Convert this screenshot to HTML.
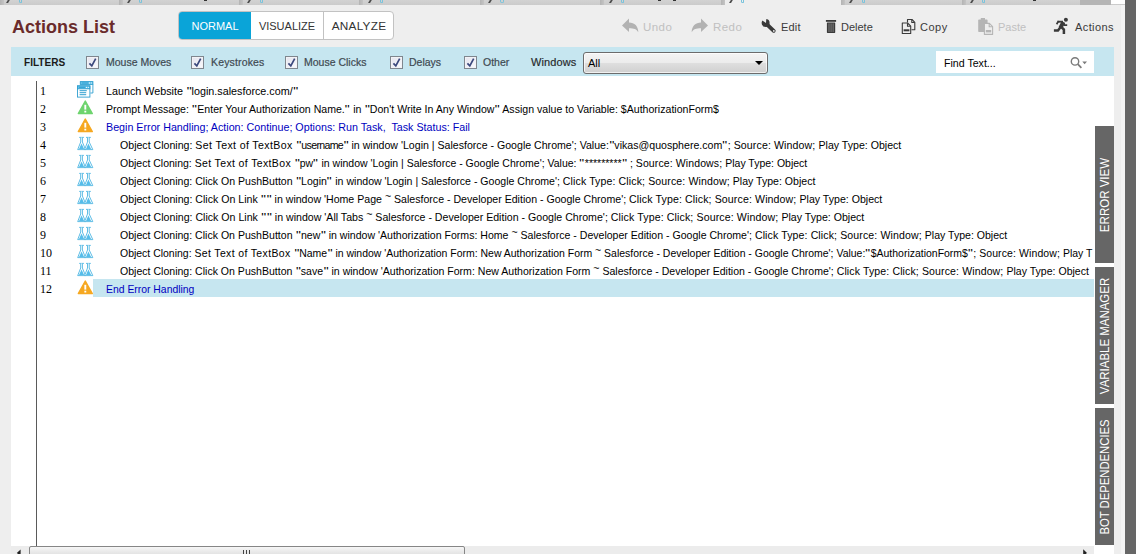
<!DOCTYPE html>
<html>
<head>
<meta charset="utf-8">
<title>Actions List</title>
<style>
html,body{margin:0;padding:0;}
body{width:1136px;height:554px;overflow:hidden;position:relative;background:#eeeeee;font-family:"Liberation Sans",sans-serif;color:#222;}
.abs{position:absolute;}
#topstrip{left:0;top:0;width:1136px;height:5px;background:linear-gradient(#d2d2d2,#cbcbcb);overflow:hidden;}
#topstrip i{position:absolute;top:0;height:5px;display:block;}
#title{left:12px;top:16px;font-size:18px;font-weight:bold;color:#6a2b2b;line-height:22px;white-space:nowrap;}
#modes{left:178px;top:11px;width:216px;height:29px;border:1px solid #c2c2c2;border-radius:4px;box-sizing:border-box;background:#fff;overflow:hidden;}
#modes span{position:absolute;top:0;height:27px;line-height:29px;font-size:11px;text-align:center;color:#333;white-space:nowrap;}
#m1{left:-1px;width:72px;padding-left:1px;background:#0aa4d8;color:#fff !important;top:-1px !important;height:29px !important;line-height:31px !important;}
#m2{left:72px;width:72px;border-right:1px solid #c2c2c2;}
#m3{left:145px;width:70px;font-size:11.8px !important;letter-spacing:0.25px;}
.tb{top:20px;font-size:11px;line-height:14px;color:#3a3a3a;white-space:nowrap;letter-spacing:0.2px;}
.tb.dis{color:#c0c0c0;}
.ico{position:absolute;overflow:visible;}
#filters{left:11px;top:47px;width:1103px;height:29px;background:#c6e6f0;}
#filters .lbl{position:absolute;top:8px;font-size:10.5px;line-height:14px;color:#3f4a52;white-space:nowrap;transform-origin:0 50%;-webkit-text-stroke:0.2px #3f4a52;}
#filters .cb{position:absolute;top:9px;width:11px;height:11px;border:1px solid #7f868e;background:linear-gradient(135deg,#e4e4ee,#fafafc);box-shadow:inset 0 0 0 1px #f2f2f6;}
#filters .cb svg{position:absolute;left:0;top:0;}
#flt{font-weight:bold;color:#1b1b1b !important;font-size:11.5px !important;transform:scaleX(0.875);-webkit-text-stroke:0 !important;}
#sel{left:572px;top:5px;width:185px;height:22px;box-sizing:border-box;border:1px solid #6c6c6c;border-radius:3px;background:linear-gradient(#f4f4f4,#ececec 48%,#dedede 52%,#d0d0d0);box-shadow:inset 0 0 0 1px rgba(255,255,255,.7);}
#sel span{position:absolute;left:4px;top:3px;font-size:11px;line-height:14px;color:#000;}
#sel b{position:absolute;right:4px;top:8px;width:0;height:0;border-left:4px solid transparent;border-right:4px solid transparent;border-top:4px solid #000;}
#find{left:925px;top:4px;width:158px;height:22px;background:#fff;}
#find span{position:absolute;left:8px;top:5px;font-size:11px;line-height:14px;color:#000;}
#list{left:11px;top:76px;width:1103px;height:478px;background:#fff;overflow:hidden;}
#vline{left:25px;top:5px;width:1px;height:465px;background:#5a5a5a;}
.row{position:absolute;left:0;width:1081px;height:18px;overflow:hidden;}
.row .n{position:absolute;left:29px;top:1px;font-family:"Liberation Serif",serif;font-size:12px;line-height:18px;color:#000;}
.row .t{position:absolute;left:95px;top:1px;font-size:11px;line-height:18px;color:#000;white-space:pre;transform-origin:0 50%;}
.row .t.ind{left:109px;}
.row .t b.w{font-weight:normal;letter-spacing:0.38px;}
.row .t b.nr{font-weight:normal;letter-spacing:-0.7px;}
.row .t b.c{font-weight:normal;letter-spacing:0.12px;}
.row .t b.tl{font-weight:normal;position:relative;top:-3px;}
.row .t b.q{font-weight:normal;display:inline-block;transform:scaleX(1.3);margin:0 0.9px;}
.row .t.blue{color:#0000c0;}
.row svg{position:absolute;left:66px;top:0;}
.row.selr .bg{position:absolute;left:82px;top:0;width:1001px;height:18px;background:#c6e6f0;}
.vtab{left:1095px;width:19px;background:#666;color:#fff;}
.vtab span{position:absolute;left:50%;top:50%;white-space:nowrap;font-size:12px;line-height:14px;transform:translate(-50%,-50%) rotate(-90deg) scaleX(var(--k));}
#rstrip{left:1125px;top:0;width:11px;height:554px;background:#666;}
#hscroll{left:11px;top:546px;width:1083px;height:8px;background:#ececec;overflow:hidden;}
#hscroll .thumb{position:absolute;left:18px;top:0;width:436px;height:12px;box-sizing:border-box;border:1px solid #868686;border-radius:2px 2px 0 0;background:linear-gradient(#f6f6f6,#dcdcdc);}
#hscroll .grip{position:absolute;top:4px;width:1.3px;height:6px;background:#444;}
#lstrip{left:1120.5px;top:5px;width:4.5px;height:549px;background:#f4f4f4;}

</style>
</head>
<body>
<div id="topstrip" class="abs"><i style="left:0.0px;width:4px;background:linear-gradient(90deg,#b4b4b4,#c4c4c4)"></i><i style="left:7.2px;width:1.6px;height:2.8px;background:#4a4a4a;transform:skewX(-30deg)"></i><i style="left:18.6px;width:1.2px;height:2.4px;border:1px solid #79c3dc;border-top:0;border-radius:0 0 2px 2px"></i><i style="left:118.5px;width:4px;background:linear-gradient(90deg,#b4b4b4,#c4c4c4)"></i><i style="left:127.7px;width:1.6px;height:2.8px;background:#4a4a4a;transform:skewX(-30deg)"></i><i style="left:139.1px;width:1.2px;height:2.4px;border:1px solid #79c3dc;border-top:0;border-radius:0 0 2px 2px"></i><i style="left:238.9px;width:4px;background:linear-gradient(90deg,#b4b4b4,#c4c4c4)"></i><i style="left:248.1px;width:1.6px;height:2.8px;background:#4a4a4a;transform:skewX(-30deg)"></i><i style="left:259.5px;width:1.2px;height:2.4px;border:1px solid #79c3dc;border-top:0;border-radius:0 0 2px 2px"></i><i style="left:359.4px;width:4px;background:linear-gradient(90deg,#b4b4b4,#c4c4c4)"></i><i style="left:368.6px;width:1.6px;height:2.8px;background:#4a4a4a;transform:skewX(-30deg)"></i><i style="left:380.0px;width:1.2px;height:2.4px;border:1px solid #79c3dc;border-top:0;border-radius:0 0 2px 2px"></i><i style="left:479.8px;width:4px;background:linear-gradient(90deg,#b4b4b4,#c4c4c4)"></i><i style="left:489.0px;width:1.6px;height:2.8px;background:#4a4a4a;transform:skewX(-30deg)"></i><i style="left:500.4px;width:1.2px;height:2.4px;border:1px solid #79c3dc;border-top:0;border-radius:0 0 2px 2px"></i><i style="left:600.2px;width:4px;background:linear-gradient(90deg,#b4b4b4,#c4c4c4)"></i><i style="left:609.5px;width:1.6px;height:2.8px;background:#4a4a4a;transform:skewX(-30deg)"></i><i style="left:620.9px;width:1.2px;height:2.4px;border:1px solid #79c3dc;border-top:0;border-radius:0 0 2px 2px"></i><i style="left:725.0px;width:115.5px;background:#eeeeee"></i><i style="left:720.7px;width:4px;background:linear-gradient(90deg,#b4b4b4,#c4c4c4)"></i><i style="left:729.9px;width:1.6px;height:2.8px;background:#4a4a4a;transform:skewX(-30deg)"></i><i style="left:741.3px;width:1.2px;height:2.4px;border:1px solid #79c3dc;border-top:0;border-radius:0 0 2px 2px"></i><i style="left:841.1px;width:4px;background:linear-gradient(90deg,#b4b4b4,#c4c4c4)"></i><i style="left:850.4px;width:1.6px;height:2.8px;background:#4a4a4a;transform:skewX(-30deg)"></i><i style="left:861.8px;width:1.2px;height:2.4px;border:1px solid #79c3dc;border-top:0;border-radius:0 0 2px 2px"></i><i style="left:961.6px;width:4px;background:linear-gradient(90deg,#b4b4b4,#c4c4c4)"></i><i style="left:970.8px;width:1.6px;height:2.8px;background:#4a4a4a;transform:skewX(-30deg)"></i><i style="left:982.2px;width:1.2px;height:2.4px;border:1px solid #79c3dc;border-top:0;border-radius:0 0 2px 2px"></i><i style="left:1082.0px;width:4px;background:linear-gradient(90deg,#b4b4b4,#c4c4c4)"></i><i style="left:1091.2px;width:1.6px;height:2.8px;background:#4a4a4a;transform:skewX(-30deg)"></i><i style="left:1102.6px;width:1.2px;height:2.4px;border:1px solid #79c3dc;border-top:0;border-radius:0 0 2px 2px"></i><i style="left:204px;width:3px;height:1.4px;background:#333"></i><i style="left:658px;width:3px;height:1.4px;background:#333"></i><i style="left:673px;width:3px;height:1.4px;background:#333"></i><i style="left:1033px;width:3px;height:1.4px;background:#333"></i><i style="left:1080px;width:31px;background:#b5b5b5"></i><i style="left:1111px;width:14px;height:4px;background:#fff"></i></div>
<div id="title" class="abs">Actions List</div>
<div id="modes" class="abs"><span id="m1">NORMAL</span><span id="m2">VISUALIZE</span><span id="m3">ANALYZE</span></div>

<div class="abs tb dis" style="left:643px;font-size:11.5px;letter-spacing:0.45px">Undo</div>
<div class="abs tb dis" style="left:713px;font-size:11.5px;letter-spacing:0.45px">Redo</div>
<div class="abs tb" style="left:781px">Edit</div>
<div class="abs tb" style="left:841px;letter-spacing:0">Delete</div>
<div class="abs tb" style="left:920px;letter-spacing:0.5px">Copy</div>
<div class="abs tb dis" style="left:998px;letter-spacing:0">Paste</div>
<div class="abs tb" style="left:1075px;letter-spacing:0.4px">Actions</div>


<!-- toolbar icons -->
<svg class="ico" style="left:622px;top:18px" width="17" height="15" viewBox="0 0 17 15"><path d="M0,7.6 L7,0.6 L7,4.4 C12.5,4.4 16.3,8 16.3,14.2 C14.5,11 12,10.2 7,10.2 L7,14 Z" fill="#b2b2b2"/></svg>
<svg class="ico" style="left:691px;top:18px" width="17" height="15" viewBox="0 0 17 15"><path d="M17,7.6 L10,0.6 L10,4.4 C4.5,4.4 0.7,8 0.7,14.2 C2.5,11 5,10.2 10,10.2 L10,14 Z" fill="#b2b2b2"/></svg>
<svg class="ico" style="left:761px;top:18px" width="17" height="17" viewBox="0 0 17 17"><path d="M5.4,5.8 L12.7,12.8" stroke="#3a3a3a" stroke-width="3.9" stroke-linecap="round" fill="none"/><circle cx="4.6" cy="4.9" r="4" fill="#3a3a3a"/><path d="M4.9,5.2 L0.6,-0.8 L7.6,-0.8 Z" fill="#eeeeee" transform="rotate(-20 4.6 4.9)"/><circle cx="12.8" cy="12.9" r="0.9" fill="#eeeeee"/></svg>
<svg class="ico" style="left:825px;top:19px" width="12" height="15" viewBox="0 0 12 15"><rect x="0.9" y="1" width="10.2" height="1.8" fill="#3a3a3a"/><rect x="1.9" y="3.4" width="8.3" height="10.5" rx="0.6" fill="#3a3a3a"/><rect x="3.5" y="4.4" width="1" height="8.6" fill="#808080"/><rect x="5.55" y="4.4" width="1" height="8.6" fill="#808080"/><rect x="7.6" y="4.4" width="1" height="8.6" fill="#808080"/></svg>
<svg class="ico" style="left:901px;top:18px" width="15" height="17" viewBox="0 0 15 17"><g fill="none" stroke="#3a3a3a" stroke-width="1.1" stroke-linejoin="round"><path d="M6.5,4.5 L6.5,1.5 L11,1.5 L13.8,4.3 L13.8,11.8 L10.5,11.8"/><path d="M10.8,1.7 L10.8,4.5 L13.6,4.5"/><path d="M1.3,15.5 L1.3,5 L6.6,5 L9.7,8.1 L9.7,15.5 Z" fill="#eeeeee"/><path d="M6.5,5.2 L6.5,8.2 L9.5,8.2"/></g><rect x="2.6" y="11.3" width="5.8" height="2" fill="#3a3a3a"/></svg>
<svg class="ico" style="left:977px;top:17px" width="17" height="19" viewBox="0 0 17 19"><rect x="1.2" y="2.6" width="9.4" height="12.4" rx="0.8" fill="#b5b5b5"/><rect x="3.8" y="1" width="4.2" height="3" fill="#b5b5b5"/><path d="M7.4,17.4 L7.4,6.4 L12.4,6.4 L15.6,9.6 L15.6,17.4 Z" fill="#eeeeee" stroke="#b5b5b5" stroke-width="1.1" stroke-linejoin="round"/><path d="M12.2,6.6 L12.2,9.8 L15.4,9.8" fill="none" stroke="#b5b5b5" stroke-width="1.1"/><rect x="8.8" y="13" width="5.4" height="2.4" fill="#b5b5b5"/></svg>
<svg class="ico" style="left:1053px;top:17px" width="16" height="18" viewBox="0 0 16 18"><circle cx="12.9" cy="2.7" r="2" fill="#3a3a3a"/><g fill="none" stroke="#3a3a3a" stroke-linecap="butt" stroke-linejoin="miter"><path d="M10.4,5 L7.4,10.8" stroke-width="4"/><path d="M4.6,4.7 L10,4.7" stroke-width="1.9"/><path d="M5.6,4 L3.6,7.2" stroke-width="1.7"/><path d="M10.6,6 L11.4,8.2 L14.2,8.2" stroke-width="1.8"/><path d="M7.6,10 L5,13.4 L0.9,13.4" stroke-width="2.5"/><path d="M8,9.6 L10.9,12.6 L10.9,16.9" stroke-width="2.5"/></g></svg>

<div id="filters" class="abs">
  <div class="lbl" id="flt" style="left:13px">FILTERS</div>
  <div class="cb" style="left:75px"><svg width="11" height="11" viewBox="0 0 11 11"><path d="M2.4,6.4 L4.8,8.9 L8.7,1.7" fill="none" stroke="#3b487c" stroke-width="1.7"/></svg></div><div class="lbl" style="left:95px">Mouse Moves</div>
  <div class="cb" style="left:180px"><svg width="11" height="11" viewBox="0 0 11 11"><path d="M2.4,6.4 L4.8,8.9 L8.7,1.7" fill="none" stroke="#3b487c" stroke-width="1.7"/></svg></div><div class="lbl" style="left:200px;letter-spacing:0.15px">Keystrokes</div>
  <div class="cb" style="left:274px"><svg width="11" height="11" viewBox="0 0 11 11"><path d="M2.4,6.4 L4.8,8.9 L8.7,1.7" fill="none" stroke="#3b487c" stroke-width="1.7"/></svg></div><div class="lbl" style="left:293px">Mouse Clicks</div>
  <div class="cb" style="left:379px"><svg width="11" height="11" viewBox="0 0 11 11"><path d="M2.4,6.4 L4.8,8.9 L8.7,1.7" fill="none" stroke="#3b487c" stroke-width="1.7"/></svg></div><div class="lbl" style="left:398px">Delays</div>
  <div class="cb" style="left:453px"><svg width="11" height="11" viewBox="0 0 11 11"><path d="M2.4,6.4 L4.8,8.9 L8.7,1.7" fill="none" stroke="#3b487c" stroke-width="1.7"/></svg></div><div class="lbl" style="left:472px">Other</div>
  <div class="lbl" style="left:520px;color:#1b1b1b;font-size:11px;letter-spacing:0.1px">Windows</div>
  <div id="sel" class="abs"><span>All</span><b></b></div>
  <div id="find" class="abs"><span style="transform:scaleX(0.965);transform-origin:0 50%">Find Text...</span><svg class="ico" style="left:133px;top:4px" width="22" height="16" viewBox="0 0 22 16"><circle cx="6" cy="6.4" r="3.7" fill="none" stroke="#7a7a7a" stroke-width="1.4"/><path d="M8.8,9.2 L12.4,12.8" stroke="#7a7a7a" stroke-width="1.7"/><path d="M13.3,6.4 L18,6.4 L15.65,9.2 Z" fill="#7a7a7a"/></svg></div>
</div>

<div id="list" class="abs">
  <div id="vline" class="abs"></div>
  <div class="row" style="top:5px"><svg width="17" height="17" viewBox="0 0 17 17"><rect x="3.3" y="0.6" width="12.6" height="2.8" fill="#63c2e8" stroke="#2f9fd0" stroke-width="0.9"/><path d="M15.9,3.4 L15.9,12 L13.4,12" fill="none" stroke="#2f9fd0" stroke-width="0.9"/><path d="M5,2 L11,2" stroke="#2f9fd0" stroke-width="0.9"/><rect x="12" y="1.5" width="1" height="1" fill="#fff"/><rect x="13.8" y="1.5" width="1" height="1" fill="#fff"/><rect x="0.5" y="4.9" width="12.4" height="11.2" fill="#fff" stroke="#2f9fd0" stroke-width="0.9"/><rect x="0.5" y="4.9" width="12.4" height="2.9" fill="#63c2e8" stroke="#2f9fd0" stroke-width="0.9"/><path d="M2,6.4 L8,6.4" stroke="#2f9fd0" stroke-width="0.9"/><rect x="9" y="5.9" width="1" height="1" fill="#fff"/><rect x="10.8" y="5.9" width="1" height="1" fill="#fff"/><path d="M2.6,9.7 L9.8,9.7 M2.6,11.7 L9.2,11.7 M2.6,13.7 L9.2,13.7" stroke="#2f9fd0" stroke-width="1"/></svg><span class="n">1</span><span class="t" style="transform:scaleX(0.9784)">Launch Website <b class="q">"</b>login.salesforce.com/<b class="q">"</b></span></div>
  <div class="row" style="top:23px"><svg width="17" height="15" viewBox="0 0 17 15" style="top:1px"><path d="M8.3,1 L15.3,13.6 L1.3,13.6 Z" fill="#6ed46e" stroke="#6ed46e" stroke-width="1.4" stroke-linejoin="round"/><path d="M8.3,4.8 L8.3,9.6" stroke="#fff" stroke-width="1.9"/><rect x="7.35" y="10.7" width="1.9" height="1.8" fill="#fff"/></svg><span class="n">2</span><span class="t" style="transform:scaleX(0.9612)">Prompt Message: <b class="q">"</b>Enter Your Authorization Name.<b class="q">"</b> in <b class="q">"</b>Don't Write In Any Window<b class="q">"</b> Assign value to Variable: $AuthorizationForm$</span></div>
  <div class="row" style="top:41px"><svg width="17" height="15" viewBox="0 0 17 15" style="top:1px"><path d="M8.3,1 L15.3,13.6 L1.3,13.6 Z" fill="#f6a821" stroke="#f6a821" stroke-width="1.4" stroke-linejoin="round"/><path d="M8.3,4.8 L8.3,9.6" stroke="#fff" stroke-width="1.9"/><rect x="7.35" y="10.7" width="1.9" height="1.8" fill="#fff"/></svg><span class="n">3</span><span class="t blue" style="transform:scaleX(0.9738)">Begin Error Handling; Action: Continue; Options: Run Task,  Task Status: Fail</span></div>
  <div class="row" style="top:59px"><svg width="17" height="15" viewBox="0 0 17 15" style="top:1px"><g stroke="#4db6e2" stroke-width="0.9" fill="none"><path d="M2.2,1.4 L6.9,1.4 M9,1.4 L13.8,1.4"/><path d="M3.7,1.4 L3.7,6 L0.7,13.6 L8.5,13.6 L5.4,6 L5.4,1.4" fill="#fff"/><path d="M10.5,1.4 L10.5,6 L7.6,13.6 L15.8,13.6 L12.2,6 L12.2,1.4" fill="#fff"/></g><path d="M4.55,7.6 L7.1,13.1 L2,13.1 Z M11.35,7.6 L14.1,13.1 L9,13.1 Z" fill="#56bdea"/></svg><span class="n">4</span><span class="t ind" style="transform:scaleX(0.9628)">Object Cloning: <b class="w">Set Text of TextBox </b><b class="q">"</b><b class="nr">username</b><b class="q">"</b> in window 'Login | Salesforce - Google Chrome'; Value:<b class="q">"</b>vikas@quosphere.com<b class="q">"</b>; <b class="c">Source: Window; </b>Play Type: Object</span></div>
  <div class="row" style="top:77px"><svg width="17" height="15" viewBox="0 0 17 15" style="top:1px"><g stroke="#4db6e2" stroke-width="0.9" fill="none"><path d="M2.2,1.4 L6.9,1.4 M9,1.4 L13.8,1.4"/><path d="M3.7,1.4 L3.7,6 L0.7,13.6 L8.5,13.6 L5.4,6 L5.4,1.4" fill="#fff"/><path d="M10.5,1.4 L10.5,6 L7.6,13.6 L15.8,13.6 L12.2,6 L12.2,1.4" fill="#fff"/></g><path d="M4.55,7.6 L7.1,13.1 L2,13.1 Z M11.35,7.6 L14.1,13.1 L9,13.1 Z" fill="#56bdea"/></svg><span class="n">5</span><span class="t ind" style="transform:scaleX(0.954)">Object Cloning: <b class="w">Set Text of TextBox </b><b class="q">"</b>pw<b class="q">"</b> in window 'Login | Salesforce - Google Chrome'; Value: <b class="q">"</b>*********<b class="q">"</b> ; <b class="c">Source: Windows; </b>Play Type: Object</span></div>
  <div class="row" style="top:95px"><svg width="17" height="15" viewBox="0 0 17 15" style="top:1px"><g stroke="#4db6e2" stroke-width="0.9" fill="none"><path d="M2.2,1.4 L6.9,1.4 M9,1.4 L13.8,1.4"/><path d="M3.7,1.4 L3.7,6 L0.7,13.6 L8.5,13.6 L5.4,6 L5.4,1.4" fill="#fff"/><path d="M10.5,1.4 L10.5,6 L7.6,13.6 L15.8,13.6 L12.2,6 L12.2,1.4" fill="#fff"/></g><path d="M4.55,7.6 L7.1,13.1 L2,13.1 Z M11.35,7.6 L14.1,13.1 L9,13.1 Z" fill="#56bdea"/></svg><span class="n">6</span><span class="t ind" style="transform:scaleX(0.9603)">Object Cloning: Click On PushButton <b class="q">"</b>Login<b class="q">"</b> in window 'Login | Salesforce - Google Chrome'; <b class="c">Click Type: Click; Source: Window; </b>Play Type: Object</span></div>
  <div class="row" style="top:113px"><svg width="17" height="15" viewBox="0 0 17 15" style="top:1px"><g stroke="#4db6e2" stroke-width="0.9" fill="none"><path d="M2.2,1.4 L6.9,1.4 M9,1.4 L13.8,1.4"/><path d="M3.7,1.4 L3.7,6 L0.7,13.6 L8.5,13.6 L5.4,6 L5.4,1.4" fill="#fff"/><path d="M10.5,1.4 L10.5,6 L7.6,13.6 L15.8,13.6 L12.2,6 L12.2,1.4" fill="#fff"/></g><path d="M4.55,7.6 L7.1,13.1 L2,13.1 Z M11.35,7.6 L14.1,13.1 L9,13.1 Z" fill="#56bdea"/></svg><span class="n">7</span><span class="t ind" style="transform:scaleX(0.9626)">Object Cloning: Click On Link <b class="q">"</b><b class="q">"</b> in window 'Home Page <b class="tl">~</b> Salesforce - Developer Edition - Google Chrome'; <b class="c">Click Type: Click; Source: Window; </b>Play Type: Object</span></div>
  <div class="row" style="top:131px"><svg width="17" height="15" viewBox="0 0 17 15" style="top:1px"><g stroke="#4db6e2" stroke-width="0.9" fill="none"><path d="M2.2,1.4 L6.9,1.4 M9,1.4 L13.8,1.4"/><path d="M3.7,1.4 L3.7,6 L0.7,13.6 L8.5,13.6 L5.4,6 L5.4,1.4" fill="#fff"/><path d="M10.5,1.4 L10.5,6 L7.6,13.6 L15.8,13.6 L12.2,6 L12.2,1.4" fill="#fff"/></g><path d="M4.55,7.6 L7.1,13.1 L2,13.1 Z M11.35,7.6 L14.1,13.1 L9,13.1 Z" fill="#56bdea"/></svg><span class="n">8</span><span class="t ind" style="transform:scaleX(0.964)">Object Cloning: Click On Link <b class="q">"</b><b class="q">"</b> in window 'All Tabs <b class="tl">~</b> Salesforce - Developer Edition - Google Chrome'; <b class="c">Click Type: Click; Source: Window; </b>Play Type: Object</span></div>
  <div class="row" style="top:149px"><svg width="17" height="15" viewBox="0 0 17 15" style="top:1px"><g stroke="#4db6e2" stroke-width="0.9" fill="none"><path d="M2.2,1.4 L6.9,1.4 M9,1.4 L13.8,1.4"/><path d="M3.7,1.4 L3.7,6 L0.7,13.6 L8.5,13.6 L5.4,6 L5.4,1.4" fill="#fff"/><path d="M10.5,1.4 L10.5,6 L7.6,13.6 L15.8,13.6 L12.2,6 L12.2,1.4" fill="#fff"/></g><path d="M4.55,7.6 L7.1,13.1 L2,13.1 Z M11.35,7.6 L14.1,13.1 L9,13.1 Z" fill="#56bdea"/></svg><span class="n">9</span><span class="t ind" style="transform:scaleX(0.9597)">Object Cloning: Click On PushButton <b class="q">"</b>new<b class="q">"</b> in window 'Authorization Forms: Home <b class="tl">~</b> Salesforce - Developer Edition - Google Chrome'; <b class="c">Click Type: Click; Source: Window; </b>Play Type: Object</span></div>
  <div class="row" style="top:167px;width:1082px"><svg width="17" height="15" viewBox="0 0 17 15" style="top:1px"><g stroke="#4db6e2" stroke-width="0.9" fill="none"><path d="M2.2,1.4 L6.9,1.4 M9,1.4 L13.8,1.4"/><path d="M3.7,1.4 L3.7,6 L0.7,13.6 L8.5,13.6 L5.4,6 L5.4,1.4" fill="#fff"/><path d="M10.5,1.4 L10.5,6 L7.6,13.6 L15.8,13.6 L12.2,6 L12.2,1.4" fill="#fff"/></g><path d="M4.55,7.6 L7.1,13.1 L2,13.1 Z M11.35,7.6 L14.1,13.1 L9,13.1 Z" fill="#56bdea"/></svg><span class="n">10</span><span class="t ind" style="transform:scaleX(0.9513)">Object Cloning: <b class="w">Set Text of TextBox </b><b class="q">"</b>Name<b class="q">"</b> in window 'Authorization Form: New Authorization Form <b class="tl">~</b> Salesforce - Developer Edition - Google Chrome'; Value:<b class="q">"</b>$AuthorizationForm$<b class="q">"</b>; <b class="c">Source: Window; </b>Play T<b style="font-weight:normal;margin-left:2.5px">ype: Object</b></span></div>
  <div class="row" style="top:185px"><svg width="17" height="15" viewBox="0 0 17 15" style="top:1px"><g stroke="#4db6e2" stroke-width="0.9" fill="none"><path d="M2.2,1.4 L6.9,1.4 M9,1.4 L13.8,1.4"/><path d="M3.7,1.4 L3.7,6 L0.7,13.6 L8.5,13.6 L5.4,6 L5.4,1.4" fill="#fff"/><path d="M10.5,1.4 L10.5,6 L7.6,13.6 L15.8,13.6 L12.2,6 L12.2,1.4" fill="#fff"/></g><path d="M4.55,7.6 L7.1,13.1 L2,13.1 Z M11.35,7.6 L14.1,13.1 L9,13.1 Z" fill="#56bdea"/></svg><span class="n">11</span><span class="t ind" style="transform:scaleX(0.9592)">Object Cloning: Click On PushButton <b class="q">"</b>save<b class="q">"</b> in window 'Authorization Form: New Authorization Form <b class="tl">~</b> Salesforce - Developer Edition - Google Chrome'; <b class="c">Click Type: Click; Source: Window; </b>Play Type: Object</span></div>
  <div class="row selr" style="top:203px;width:1083px"><div class="bg"></div><svg width="17" height="15" viewBox="0 0 17 15" style="top:1px"><path d="M8.3,1 L15.3,13.6 L1.3,13.6 Z" fill="#f6a821" stroke="#f6a821" stroke-width="1.4" stroke-linejoin="round"/><path d="M8.3,4.8 L8.3,9.6" stroke="#fff" stroke-width="1.9"/><rect x="7.35" y="10.7" width="1.9" height="1.8" fill="#fff"/></svg><span class="n">12</span><span class="t blue" style="transform:scaleX(0.9448)">End Error Handling</span></div>
</div>

<div class="abs vtab" style="top:126px;height:137px;--k:0.96"><span>ERROR VIEW</span></div>
<div class="abs vtab" style="top:267px;height:137px;--k:0.955"><span>VARIABLE MANAGER</span></div>
<div class="abs vtab" style="top:408px;height:137px;--k:0.94"><span>BOT DEPENDENCIES</span></div>
<div id="rstrip" class="abs"></div>
<div id="lstrip" class="abs"></div>
<div id="hscroll" class="abs"><div class="thumb"></div><i class="grip" style="left:232px"></i><i class="grip" style="left:235px"></i><i class="grip" style="left:238px"></i>
<svg class="ico" style="left:5px;top:2px" width="6" height="8" viewBox="0 0 6 8"><path d="M4.6,1.4 L4.6,8 L0.8,5 Z" fill="#222"/></svg>
<svg class="ico" style="left:1071px;top:2px" width="6" height="8" viewBox="0 0 6 8"><path d="M1.2,1.2 L1.2,8 L5,5 Z" fill="#222"/></svg></div>
</body>
</html>
